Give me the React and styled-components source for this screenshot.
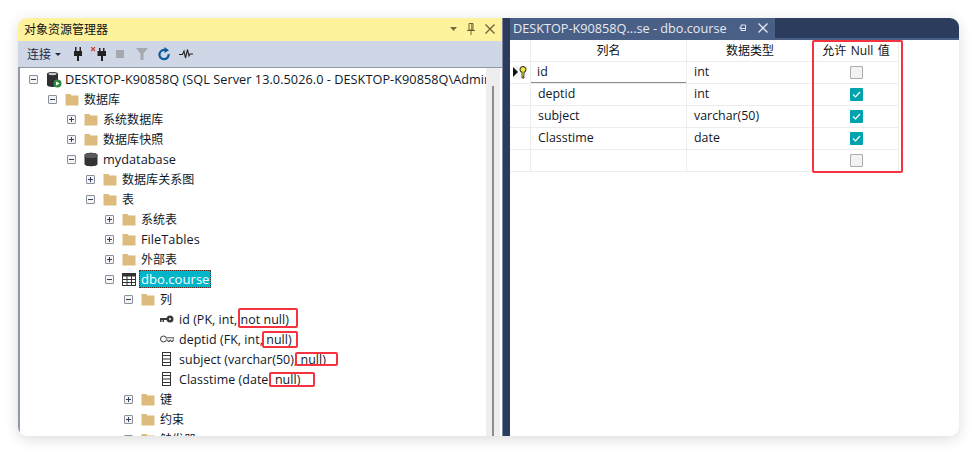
import React from "react";
import styled, { createGlobalStyle } from "styled-components";

const FONT = `"Open Sans", "Noto Sans CJK SC", sans-serif`;

const Global = createGlobalStyle`
  html, body {
    margin: 0;
    background: #fff;
    font-family: ${FONT};
  }
`;

const Page = styled.div`
  width: 977px;
  height: 454px;
  padding: 18px;
  box-sizing: border-box;
`;

const Card = styled.div`
  display: flex;
  width: 941px;
  height: 418px;
  border-radius: 9px;
  overflow: hidden;
  background: #fff;
  box-shadow: 0 3px 14px rgba(0, 0, 0, 0.14);
`;

const LeftPanel = styled.section`
  display: flex;
  flex-direction: column;
  width: 484px;
  flex: none;
`;

const TitleBar = styled.div`
  display: flex;
  align-items: center;
  justify-content: space-between;
  height: 23px;
  flex: none;
  padding: 0 7px 1px 6px;
  box-sizing: border-box;
  background: #fff29d;
  color: #111;
  font-size: 12px;
`;

const TitleControls = styled.div`
  display: flex;
  align-items: center;
  gap: 10px;
`;

const Toolbar = styled.div`
  display: flex;
  align-items: center;
  height: 26px;
  flex: none;
  padding-left: 9px;
  background: #cfd6e5;
  color: #1e2a44;
  font-size: 12px;
`;

const ToolIcon = styled.svg`
  display: block;
  flex: none;
  margin-left: ${(p) => p.$gap}px;
`;

const TreeWrap = styled.div`
  display: flex;
  flex: 1;
  min-height: 0;
  border-top: 1px solid #8f97a8;
  border-left: 2px solid #8f97a8;
`;

const Tree = styled.div`
  flex: 1;
  min-width: 0;
  overflow: hidden;
  padding-top: 1px;
`;

const Scrollbar = styled.div`
  width: 14px;
  flex: none;
  margin-right: 2px;
  padding-top: 18px;
  box-sizing: border-box;
  display: flex;
  justify-content: center;
  background: #eeeeee;
`;

const ScrollThumb = styled.div`
  width: 2px;
  height: 100%;
  background: #8c8c8c;
`;

const Row = styled.div`
  position: relative;
  display: flex;
  align-items: center;
  height: 20px;
  padding-left: ${(p) => 9 + p.$level * 19}px;
  white-space: nowrap;
  color: #101828;
  font-size: ${(p) => (p.$small ? "12.45px" : "12.7px")};
  letter-spacing: 0.05px;
`;

const ExpanderSlot = styled.div`
  width: 17px;
  flex: none;
`;

const Expander = styled.div`
  position: relative;
  width: 9px;
  height: 9px;
  box-sizing: border-box;
  border: 1px solid #8b8f99;
  border-radius: 1px;
  background: #f4f4f4;

  &::before {
    content: "";
    position: absolute;
    left: 1px;
    right: 1px;
    top: 3px;
    height: 1px;
    background: #35405c;
  }

  &::after {
    content: "";
    display: ${(p) => (p.$open ? "none" : "block")};
    position: absolute;
    top: 1px;
    bottom: 1px;
    left: 3px;
    width: 1px;
    background: #35405c;
  }
`;

const IconSlot = styled.div`
  display: flex;
  align-items: center;
  width: 19px;
  flex: none;
`;

const Label = styled.span`
  font-size: ${(p) => (p.$cjk ? "12px" : "inherit")};
  padding: 1px 2px;
  margin-left: -2px;
  ${(p) =>
    p.$selected &&
    `
    background: #00b5c8;
    color: #fff;
    outline: 1px dotted #5a2a20;
    outline-offset: -1px;
    font-size: 13px;
    padding: 0 2px;
  `}
`;

const Highlight = styled.div`
  position: absolute;
  left: ${(p) => p.$left}px;
  top: ${(p) => p.$top}px;
  width: ${(p) => p.$width}px;
  height: ${(p) => p.$height}px;
  box-sizing: border-box;
  border: 2px solid #f5333f;
  border-radius: 2px;
  pointer-events: none;
`;

const Splitter = styled.div`
  width: 8px;
  flex: none;
  background: #2c3c5c;
  border-left: 1px solid #7c88a2;
  box-sizing: border-box;
`;

const RightPanel = styled.section`
  flex: 1;
  min-width: 0;
  display: flex;
  flex-direction: column;
`;

const TabBar = styled.div`
  display: flex;
  height: 22px;
  flex: none;
  box-sizing: border-box;
  background: #2c3c5c;
  border-bottom: 2px solid #4a5f85;
`;

const Tab = styled.div`
  display: flex;
  align-items: center;
  width: 265px;
  box-sizing: border-box;
  padding-left: 3px;
  background: #4a5f85;
  color: #e6eaf2;
  font-size: 12.7px;
  white-space: nowrap;
`;

const TabControls = styled.div`
  display: flex;
  align-items: center;
  gap: 11px;
  margin-left: 12px;
`;

const GridTable = styled.div`
  position: relative;
`;

const GridRow = styled.div`
  display: grid;
  grid-template-columns: 21px 156px 127px 85px;
  height: 22px;
  box-sizing: border-box;
  width: 389px;
  border-bottom: 1px solid #ececec;
  color: #111827;
  font-size: 12.4px;
`;

const Cell = styled.div`
  display: flex;
  align-items: center;
  justify-content: ${(p) => (p.$center ? "center" : "flex-start")};
  padding-left: ${(p) => (p.$center ? 0 : 7)}px;
  padding-bottom: 1px;
  border-right: 1px solid #ececec;
  min-width: 0;
`;

const TextCell = styled(Cell)`
  padding-bottom: 3px;
  ${(p) => p.$focus && "box-shadow: inset 0 -1px 0 #8d8d8d; padding-left: 6px;"}
`;

const HeaderText = styled.span`
  font-size: 12px;
  word-spacing: 1.5px;
  color: #111;
`;

const Check = styled.div`
  display: flex;
  align-items: center;
  justify-content: center;
  width: 13px;
  height: 13px;
  box-sizing: border-box;
  border-radius: 1px;
  background: ${(p) => (p.$on ? "#00a3ad" : "#f2f2f2")};
  border: ${(p) => (p.$on ? "none" : "1px solid #ababab")};
`;

const NullBox = styled.div`
  position: absolute;
  left: 302px;
  top: 0;
  width: 91px;
  height: 133px;
  box-sizing: border-box;
  border: 2px solid #f5333f;
  border-radius: 2px;
  pointer-events: none;
`;

const FolderIcon = () => (
  <svg width="14" height="13" viewBox="0 0 14 13">
    <path d="M0.5 1 h5 l1 1.5 h7 v10 h-13 z" fill="#ddbb7d" />
  </svg>
);

const ServerIcon = () => (
  <svg width="16" height="17" viewBox="0 0 16 17">
    <path d="M1 3 C1 0.4 12 0.4 12 3 V14 C12 16.6 1 16.6 1 14 Z" fill="#2f2f33" />
    <ellipse cx="6.5" cy="3" rx="4" ry="1.2" fill="#c9c9c9" />
    <circle cx="11.5" cy="12.5" r="4" fill="#2d8a3e" />
    <path d="M10 10.4 L13.6 12.5 L10 14.6 Z" fill="#fff" />
  </svg>
);

const DatabaseIcon = () => (
  <svg width="14" height="15" viewBox="0 0 14 15">
    <path d="M0.5 3 C0.5 0 13.5 0 13.5 3 V12 C13.5 15 0.5 15 0.5 12 Z" fill="#333336" />
    <path d="M0.5 4.5 C2 6.5 12 6.5 13.5 4.5 V3 C12 0.8 2 0.8 0.5 3 Z" fill="#5a5a5e" />
  </svg>
);

const TableIcon = () => (
  <svg width="14" height="13" viewBox="0 0 14 13">
    <rect x="0.5" y="0.5" width="13" height="12" fill="#fff" stroke="#333" />
    <rect x="0.5" y="0.5" width="13" height="3" fill="#333" />
    <path d="M0 6.5 H14 M0 9.5 H14 M5 3 V13 M9.5 3 V13" stroke="#333" />
  </svg>
);

const KeyIcon = () => (
  <svg width="14" height="8" viewBox="0 0 14 8">
    <path fillRule="evenodd" d="M10 0.5 A3.5 3.5 0 1 1 10 7.5 A3.5 3.5 0 1 1 10 0.5 Z M10 3 A1 1 0 1 0 10 5 A1 1 0 1 0 10 3 Z" fill="#3a3a3a" />
    <path d="M0 3 H7 V5 H4 V7 H2.5 V5 H1.5 V7 H0 Z" fill="#3a3a3a" />
  </svg>
);

const ForeignKeyIcon = () => (
  <svg width="14" height="8" viewBox="0 0 14 8">
    <circle cx="3.5" cy="4" r="3" fill="#fff" stroke="#3a3a3a" />
    <path d="M6.5 2.8 H14 V5.2 H12.5 V6.5 H11 V5.2 H9.5 V6.5 H8 V5.2 H6.5" fill="#fff" stroke="#3a3a3a" strokeWidth="0.9" />
  </svg>
);

const ColumnIcon = () => (
  <svg width="9" height="14" viewBox="0 0 9 14" style={{ marginLeft: 2 }}>
    <rect x="0.5" y="0.5" width="8" height="13" fill="#fff" stroke="#333" />
    <path d="M0 3.5 H9 M0 7 H9 M0 10.5 H9" stroke="#333" />
  </svg>
);

const icons = {
  folder: <FolderIcon />,
  server: <ServerIcon />,
  database: <DatabaseIcon />,
  table: <TableIcon />,
  key: <KeyIcon />,
  fk: <ForeignKeyIcon />,
  column: <ColumnIcon />,
};

const rows = [
  { level: 0, exp: "open", icon: "server", text: "DESKTOP-K90858Q (SQL Server 13.0.5026.0 - DESKTOP-K90858Q\\Administrator" },
  { level: 1, exp: "open", icon: "folder", text: "数据库", cjk: true },
  { level: 2, exp: "closed", icon: "folder", text: "系统数据库", cjk: true },
  { level: 2, exp: "closed", icon: "folder", text: "数据库快照", cjk: true },
  { level: 2, exp: "open", icon: "database", text: "mydatabase" },
  { level: 3, exp: "closed", icon: "folder", text: "数据库关系图", cjk: true },
  { level: 3, exp: "open", icon: "folder", text: "表", cjk: true },
  { level: 4, exp: "closed", icon: "folder", text: "系统表", cjk: true },
  { level: 4, exp: "closed", icon: "folder", text: "FileTables" },
  { level: 4, exp: "closed", icon: "folder", text: "外部表", cjk: true },
  { level: 4, exp: "open", icon: "table", text: "dbo.course", selected: true },
  { level: 5, exp: "open", icon: "folder", text: "列", cjk: true },
  { level: 6, icon: "key", text: "id (PK, int, not null)", mark: { left: 218, top: -1, width: 60, height: 20 } },
  { level: 6, icon: "fk", text: "deptid (FK, int, null)", mark: { left: 242, top: 2, width: 36, height: 17 } },
  { level: 6, icon: "column", text: "subject (varchar(50), null)", mark: { left: 275, top: 3, width: 43, height: 14 } },
  { level: 6, icon: "column", text: "Classtime (date, null)", mark: { left: 249, top: 3, width: 46, height: 15 } },
  { level: 5, exp: "closed", icon: "folder", text: "键", cjk: true },
  { level: 5, exp: "closed", icon: "folder", text: "约束", cjk: true },
  { level: 5, exp: "open", icon: "folder", text: "触发器", cjk: true },
];

const columns = [
  { name: "id", type: "int", nullable: false, key: true },
  { name: "deptid", type: "int", nullable: true },
  { name: "subject", type: "varchar(50)", nullable: true },
  { name: "Classtime", type: "date", nullable: true },
  { name: "", type: "", nullable: false },
];

function TreeRow({ row }) {
  return (
    <Row $level={row.level} $small={!!row.mark}>
      <ExpanderSlot>{row.exp && <Expander $open={row.exp === "open"} />}</ExpanderSlot>
      <IconSlot>{icons[row.icon]}</IconSlot>
      <Label $cjk={row.cjk} $selected={row.selected}>{row.text}</Label>
      {row.mark && (
        <Highlight $left={row.mark.left} $top={row.mark.top} $width={row.mark.width} $height={row.mark.height} />
      )}
    </Row>
  );
}

export default function App() {
  return (
    <Page>
      <Global />
      <Card>
        <LeftPanel>
          <TitleBar>
            对象资源管理器
            <TitleControls>
              <svg width="7" height="4" viewBox="0 0 7 4"><path d="M0 0 H7 L3.5 4 Z" fill="#7c6a3c" /></svg>
              <svg width="8" height="12" viewBox="0 0 8 12"><path d="M2 .5 H6 V7 H2 Z M0 7.5 H8 M4 8 V12 M4.8 1 V7" fill="none" stroke="#6e6238" /></svg>
              <svg width="10" height="10" viewBox="0 0 10 10"><path d="M.5 .5 L9.5 9.5 M9.5 .5 L.5 9.5" stroke="#6e6238" strokeWidth="1.3" /></svg>
            </TitleControls>
          </TitleBar>
          <Toolbar>
            连接
            <ToolIcon $gap={4} width="6" height="3" viewBox="0 0 6 3"><path d="M0 0 H6 L3 3 Z" fill="#1e2a44" /></ToolIcon>
            <ToolIcon $gap={13} width="8" height="14" viewBox="0 0 8 14"><path d="M1 0 H2.5 V4 H5.5 V0 H7 V4 H8 V9 H5 V14 H3 V9 H0 V4 H1 Z" fill="#222" /></ToolIcon>
            <ToolIcon $gap={9} width="15" height="14" viewBox="0 0 15 14">
              <path d="M0 0 L4 4 M4 0 L0 4" stroke="#c8402f" strokeWidth="1.2" />
              <path d="M8 1 H9.5 V4 H12 V1 H13.5 V4 H15 V9 H12 V14 H10 V9 H6.5 V4 H8 Z" fill="#222" />
            </ToolIcon>
            <ToolIcon $gap={10} width="8" height="8" viewBox="0 0 8 8"><rect width="8" height="8" fill="#a5a8ad" /></ToolIcon>
            <ToolIcon $gap={12} width="12" height="12" viewBox="0 0 12 12"><path d="M0 0 H12 L7.5 5.5 V12 H4.5 V5.5 Z" fill="#a5a8ad" /></ToolIcon>
            <ToolIcon $gap={10} width="12" height="14" viewBox="0 0 12 14">
              <path d="M7.5 3.2 A4.6 4.6 0 1 0 10.6 7" fill="none" stroke="#0e5c9e" strokeWidth="2.2" />
              <path d="M6.5 0 L11 3.2 L6.5 6 Z" fill="#0e5c9e" />
            </ToolIcon>
            <ToolIcon $gap={9} width="14" height="10" viewBox="0 0 14 10"><path d="M0 5.5 H3.5 L5 2 L6.5 9 L8.5 0.5 L10 7 L11 5 H14" fill="none" stroke="#222" strokeWidth="1.1" /></ToolIcon>
          </Toolbar>
          <TreeWrap>
            <Tree>
              {rows.map((row, i) => (
                <TreeRow key={i} row={row} />
              ))}
            </Tree>
            <Scrollbar><ScrollThumb /></Scrollbar>
          </TreeWrap>
        </LeftPanel>
        <Splitter />
        <RightPanel>
          <TabBar>
            <Tab>
              DESKTOP-K90858Q...se - dbo.course
              <TabControls>
                <svg width="8" height="8" viewBox="0 0 8 8"><path d="M0 4 H2 M2 1 H6.5 V6.5 H2 Z M2 4.5 H6.5" fill="none" stroke="#dfe4ee" /></svg>
                <svg width="10" height="10" viewBox="0 0 10 10"><path d="M.5 .5 L9.5 9.5 M9.5 .5 L.5 9.5" stroke="#dfe4ee" strokeWidth="1.4" /></svg>
              </TabControls>
            </Tab>
          </TabBar>
          <GridTable>
            <GridRow>
              <Cell />
              <Cell $center><HeaderText>列名</HeaderText></Cell>
              <Cell $center><HeaderText>数据类型</HeaderText></Cell>
              <Cell $center><HeaderText>允许 Null 值</HeaderText></Cell>
            </GridRow>
            {columns.map((col, i) => (
              <GridRow key={i}>
                <Cell $center>
                  {col.key && (
                    <svg width="14" height="13" viewBox="0 0 14 13">
                      <rect width="14" height="13" fill="#f4f4f4" />
                      <path d="M0 1 L5 6 L0 11 Z" fill="#111" />
                      <circle cx="10" cy="3.5" r="3" fill="#f5e63c" stroke="#222" />
                      <path d="M9 6 V12 H11 V11 H10.5 V10 H11 V6" fill="#f5e63c" stroke="#222" strokeWidth="0.8" />
                    </svg>
                  )}
                </Cell>
                <TextCell $focus={col.key}>{col.name}</TextCell>
                <TextCell>{col.type}</TextCell>
                <Cell $center>
                  <Check $on={col.nullable}>
                    {col.nullable && (
                      <svg width="9" height="7" viewBox="0 0 9 7"><path d="M1 3.5 L3.5 6 L8 1" fill="none" stroke="#fff" strokeWidth="1.2" /></svg>
                    )}
                  </Check>
                </Cell>
              </GridRow>
            ))}
            <NullBox />
          </GridTable>
        </RightPanel>
      </Card>
    </Page>
  );
}
